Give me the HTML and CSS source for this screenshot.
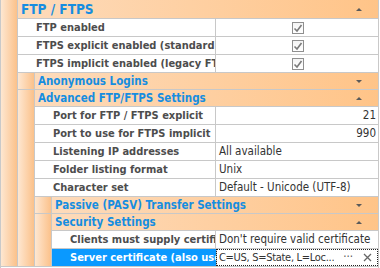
FILE: index.html
```html
<!DOCTYPE html>
<html lang="en">

<head>
    <meta charset="UTF-8">
    <title>FTP / FTPS</title>
    <link rel="stylesheet" href="styles.css">
</head>

<body>
    <div class="grid">
        <div class="cat">
            <div class="strip"></div>
            <div class="cat-main">
                <div class="cat-head top"><span class="cat-title">FTP / FTPS</span><span class="arrow up"></span></div>
                <div class="row">
                    <div class="name">FTP enabled</div>
                    <div class="value center"><span class="check"><svg width="12" height="12" viewBox="0 0 12 12"><path d="M2.5 6.5 L5 9 L9.5 3" fill="none" stroke="#7a7a7a" stroke-width="1.6"/></svg></span></div>
                </div>
                <div class="row">
                    <div class="name">FTPS explicit enabled (standard)</div>
                    <div class="value center"><span class="check"><svg width="12" height="12" viewBox="0 0 12 12"><path d="M2.5 6.5 L5 9 L9.5 3" fill="none" stroke="#7a7a7a" stroke-width="1.6"/></svg></span></div>
                </div>
                <div class="row">
                    <div class="name">FTPS implicit enabled (legacy FTPS)</div>
                    <div class="value center"><span class="check"><svg width="12" height="12" viewBox="0 0 12 12"><path d="M2.5 6.5 L5 9 L9.5 3" fill="none" stroke="#7a7a7a" stroke-width="1.6"/></svg></span></div>
                </div>

                <div class="cat">
                    <div class="strip"></div>
                    <div class="cat-main">
                        <div class="cat-head"><span class="cat-title">Anonymous Logins</span><span class="arrow down"></span></div>
                    </div>
                </div>

                <div class="cat">
                    <div class="strip"></div>
                    <div class="cat-main">
                        <div class="cat-head"><span class="cat-title">Advanced FTP/FTPS Settings</span><span class="arrow up"></span></div>
                        <div class="row">
                            <div class="name">Port for FTP / FTPS explicit</div>
                            <div class="value right">21</div>
                        </div>
                        <div class="row">
                            <div class="name">Port to use for FTPS implicit</div>
                            <div class="value right">990</div>
                        </div>
                        <div class="row">
                            <div class="name">Listening IP addresses</div>
                            <div class="value">All available</div>
                        </div>
                        <div class="row">
                            <div class="name">Folder listing format</div>
                            <div class="value">Unix</div>
                        </div>
                        <div class="row">
                            <div class="name">Character set</div>
                            <div class="value">Default - Unicode (UTF-8)</div>
                        </div>

                        <div class="cat">
                            <div class="strip"></div>
                            <div class="cat-main">
                                <div class="cat-head"><span class="cat-title">Passive (PASV) Transfer Settings</span><span class="arrow down"></span></div>
                            </div>
                        </div>

                        <div class="cat">
                            <div class="strip"></div>
                            <div class="cat-main">
                                <div class="cat-head"><span class="cat-title">Security Settings</span><span class="arrow up"></span></div>
                                <div class="row">
                                    <div class="name">Clients must supply certificate</div>
                                    <div class="value">Don't require valid certificate</div>
                                </div>
                                <div class="row selected">
                                    <div class="name">Server certificate (also used for FTPS)</div>
                                    <div class="value editing">
                                        <span class="edit-text">C=US, S=State, L=Loc...</span>
                                        <span class="dots">···</span>
                                        <svg class="clear" width="9" height="9" viewBox="0 0 9 9"><path d="M1 1 L8 8 M8 1 L1 8" stroke="#666" stroke-width="1.3"/></svg>
                                    </div>
                                </div>
                            </div>
                        </div>
                    </div>
                </div>
            </div>
        </div>
    </div>
</body>

</html>
```

FILE: styles.css
```css
body {
    margin: 0;
    background-color: white;
    font-family: "DejaVu Sans Condensed", "DejaVu Sans", sans-serif;
    font-size: 12px;
}

.grid {
    width: 377px;
    height: 268px;
    overflow: hidden;
    border-left: 1px solid #c9c9c9;
    border-right: 1px solid #c9c9c9;
}

.cat {
    display: flex;
}

.strip {
    width: 16px;
    flex-shrink: 0;
    background: linear-gradient(to right, #fee7d1, #fbc18a);
    border-right: 1px solid #c8c8c8;
    border-bottom: 1px solid #c8c8c8;
}

.cat-main {
    flex: 1;
    min-width: 0;
}

.cat-head {
    display: flex;
    align-items: center;
    height: 16px;
    padding-left: 3px;
    padding-right: 16px;
    background: linear-gradient(to right, #fddbbb, #ffc488);
    border-bottom: 1px solid #c8c8c8;
}

.cat-head.top {
    height: 18px;
}

.cat-title {
    flex: 1;
    color: #168de0;
    font-weight: bold;
    font-size: 11.5px;
    white-space: nowrap;
}

.cat-head.top .cat-title {
    font-size: 13.5px;
}

.arrow {
    width: 0;
    height: 0;
    border-left: 3px solid transparent;
    border-right: 3px solid transparent;
}

.arrow.up {
    border-bottom: 3px solid #5a5a5a;
}

.arrow.down {
    border-top: 3px solid #5a5a5a;
}

.row {
    display: flex;
    height: 17px;
    border-bottom: 1px solid #c8c8c8;
    background-color: white;
}

.name {
    flex: 1;
    min-width: 0;
    padding-left: 18px;
    line-height: 17px;
    font-size: 11px;
    font-weight: bold;
    color: #4d4d4d;
    white-space: nowrap;
    overflow: hidden;
}

.value {
    width: 157px;
    flex-shrink: 0;
    padding: 0 2px 0 3px;
    border-left: 1px solid #c8c8c8;
    line-height: 17px;
    font-size: 11.5px;
    color: #333;
    white-space: nowrap;
    overflow: hidden;
}

.value.right {
    text-align: right;
}

.value.center {
    display: flex;
    align-items: center;
    justify-content: center;
}

.check {
    display: block;
    width: 12px;
    height: 12px;
    box-sizing: border-box;
    border: 1px solid #8f8f8f;
    background: linear-gradient(#f4f4f4, #ffffff);
}

.check svg {
    display: block;
    margin: -1px 0 0 -1px;
}

.row.selected .name {
    background-color: #0a99ff;
    color: white;
}

.value.editing {
    display: flex;
    align-items: center;
    box-sizing: border-box;
    width: 162px;
    padding: 0 6px 0 2px;
    outline: 1px dotted #222;
    outline-offset: -1px;
}

.edit-text {
    flex-shrink: 1;
    min-width: 0;
    overflow: hidden;
    font-size: 11px;
    letter-spacing: -0.3px;
}

.dots {
    margin-left: auto;
    margin-right: 10px;
    color: #555;
}

.clear {
    display: block;
    flex-shrink: 0;
}
```
